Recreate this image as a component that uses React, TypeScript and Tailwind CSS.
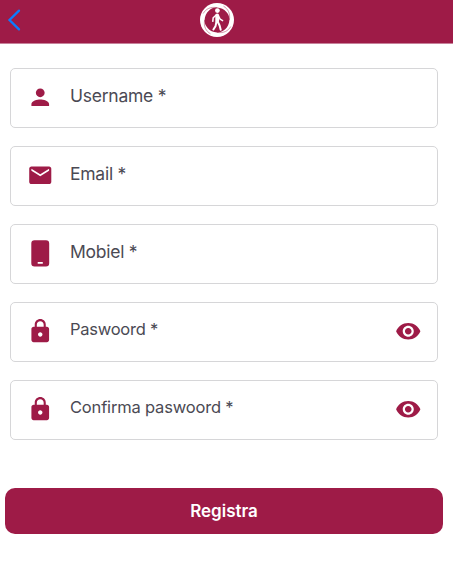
import { useState } from "react";
import type { ReactNode } from "react";

function Icon({ children }: { children: ReactNode }) {
  return (
    <svg className="h-[26.5px] w-[26.5px] shrink-0" viewBox="0 0 24 24" fill="currentColor" aria-hidden>
      {children}
    </svg>
  );
}

const ICONS = {
  person: (
    <path d="M12 12c2.21 0 4-1.79 4-4s-1.79-4-4-4-4 1.79-4 4 1.79 4 4 4zm0 2c-2.67 0-8 1.34-8 4v2h16v-2c0-2.66-5.33-4-8-4z" />
  ),
  mail: (
    <path d="M20 4H4c-1.1 0-1.99.9-1.99 2L2 18c0 1.1.9 2 2 2h16c1.1 0 2-.9 2-2V6c0-1.1-.9-2-2-2zm0 4l-8 5-8-5V6l8 5 8-5v2z" />
  ),
  phone: (
    <path
      fillRule="evenodd"
      d="M6.8 .3h10.4A2.9 2.9 0 0 1 20.1 3.2v17.9a2.9 2.9 0 0 1-2.9 2.9H6.8a2.9 2.9 0 0 1-2.9-2.9V3.2A2.9 2.9 0 0 1 6.8 .3zM9.7 20v1.4h4.6V20z"
    />
  ),
  lock: (
    <path d="M18 8h-1V6c0-2.76-2.24-5-5-5S7 3.24 7 6v2H6c-1.1 0-2 .9-2 2v10c0 1.1.9 2 2 2h12c1.1 0 2-.9 2-2V10c0-1.1-.9-2-2-2zm-6 9c-1.1 0-2-.9-2-2s.9-2 2-2 2 .9 2 2-.9 2-2 2zm3.1-9H8.9V6c0-1.71 1.39-3.1 3.1-3.1 1.71 0 3.1 1.39 3.1 3.1v2z" />
  ),
  eye: (
    <path d="M12 4.5C7 4.5 2.73 7.61 1 12c1.73 4.39 6 7.5 11 7.5s9.27-3.11 11-7.5c-1.73-4.39-6-7.5-11-7.5zM12 17c-2.76 0-5-2.24-5-5s2.24-5 5-5 5 2.24 5 5-2.24 5-5 5zm0-8c-1.66 0-3 1.34-3 3s1.34 3 3 3 3-1.34 3-3-1.34-3-3-3z" />
  ),
};

type Field = {
  name: string;
  label: string;
  icon: keyof typeof ICONS;
  type: string;
  labelClass: string;
};

const FIELDS: Field[] = [
  { name: "username", label: "Username *", icon: "person", type: "text", labelClass: "pb-[3px] text-[17.5px] tracking-[-0.25px]" },
  { name: "email", label: "Email *", icon: "mail", type: "email", labelClass: "pb-[2px] text-[17.5px] tracking-[-0.25px]" },
  { name: "mobile", label: "Mobiel *", icon: "phone", type: "tel", labelClass: "pb-[2px] text-[17.5px] tracking-[-0.25px]" },
  { name: "password", label: "Paswoord *", icon: "lock", type: "password", labelClass: "pb-[4.5px] text-[16.5px] tracking-[-0.25px]" },
  { name: "confirm", label: "Confirma paswoord *", icon: "lock", type: "password", labelClass: "pb-[4.5px] text-[16.5px] tracking-[-0.18px]" },
];

function Logo() {
  return (
    <svg className="h-9 w-9" viewBox="0 0 36 36" fill="none" aria-hidden>
      <circle cx="18" cy="18" r="17" fill="#fff" />
      <path
        d="M18 5.6c4 .2 7 1.800 9.200 4.200 2.200 2.400 3.400 5 3.200 8.200-.2 4-1.800 7-4.200 9.200-2.400 2.200-5 3.400-8.200 3.200-4-.2-7-1.800-9.200-4.200C6.600 23.800 5.400 21.200 5.600 18c.2-4 1.800-7 4.200-9.200C12.200 6.600 14.800 5.400 18 5.600z"
        fill="#9e1b47"
      />
      <g stroke="#9e1b47" strokeWidth="0.6" opacity="0.75">
        <path d="M4.200 11.500C7 7 11 4.600 18 5.600" />
        <path d="M24.500 4.200C29 7 31.400 11 30.400 18" />
        <path d="M31.800 24.500C29 29 25 31.400 18 30.400" />
        <path d="M11.500 31.800C7 29 4.600 25 5.600 18" />
      </g>
      <circle cx="18.400" cy="8.600" r="2.400" fill="#fff" />
      <g stroke="#fff" strokeLinecap="round" strokeLinejoin="round">
        <path d="M18.200 13.500v5.500" strokeWidth="3.800" />
        <path d="M17.200 13l-3 2.700-.4 3.600M19.300 13.500l1.800 3.600 2.500 1.500" strokeWidth="1.500" />
        <path d="M17.400 20l-.8 3.900-2.200 3.600M18.900 20l1.700 3.500 1.100 4.300" strokeWidth="2" />
      </g>
    </svg>
  );
}

function FormField({ field }: { field: Field }) {
  const [value, setValue] = useState("");
  const [visible, setVisible] = useState(false);
  const isPassword = field.type === "password";

  return (
    <label className="flex h-[60px] items-center rounded-[5px] border border-[#d6d6d8] pr-4 pl-[15.5px] text-[#9e1b47]">
      <Icon>{ICONS[field.icon]}</Icon>
      <input
        name={field.name}
        type={isPassword && visible ? "text" : field.type}
        value={value}
        placeholder={field.label}
        onChange={(event) => setValue(event.target.value)}
        className={`ml-[17px] min-w-0 flex-1 bg-transparent text-[#4b4a54] outline-none placeholder:text-[#4b4a54] placeholder:opacity-100 ${field.labelClass}`}
      />
      {isPassword ? (
        <button type="button" onClick={() => setVisible(!visible)} aria-label={field.label}>
          <Icon>{ICONS.eye}</Icon>
        </button>
      ) : null}
    </label>
  );
}

export default function App() {
  return (
    <div className="min-h-screen bg-white font-['Inter',sans-serif]">
      <header className="grid h-11 grid-cols-[1fr_auto_1fr] items-center border-b border-[#c7819a] bg-[#9e1b47] pr-[19px] pb-[3px]">
        <button type="button" className="w-fit pl-[7px]" aria-label="Back">
          <svg className="h-6 w-4" viewBox="0 0 16 24" fill="none" aria-hidden>
            <path d="M12 2.6L2.5 12l9.5 9.4" stroke="#0a7cff" strokeWidth="2.3" strokeLinecap="round" />
          </svg>
        </button>
        <Logo />
      </header>

      <form onSubmit={(event) => event.preventDefault()}>
        <div className="flex flex-col gap-[18px] pt-[23.5px] pr-[15px] pl-[10px]">
          {FIELDS.map((field) => (
            <FormField key={field.name} field={field} />
          ))}
        </div>
        <div className="mt-12 pr-[10px] pl-[5px]">
          <button
            type="submit"
            className="h-[46px] w-full rounded-[10px] bg-[#9e1b47] pt-[2px] text-[17px] font-semibold text-white"
          >
            Registra
          </button>
        </div>
      </form>
    </div>
  );
}
